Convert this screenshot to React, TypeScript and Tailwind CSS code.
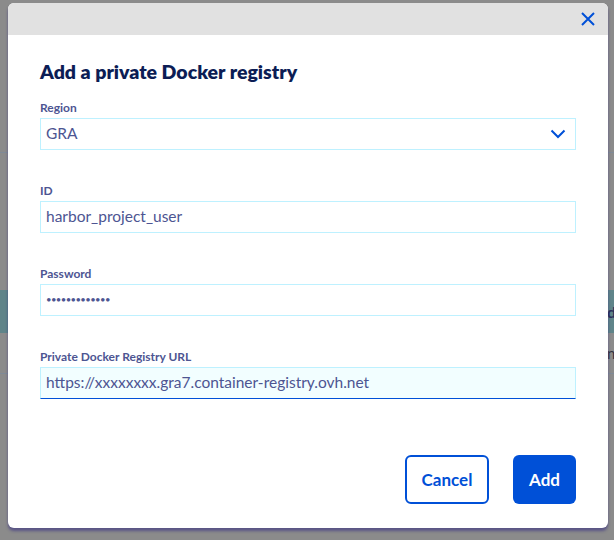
import React from "react";

const font = { fontFamily: '"Lato", "Open Sans", sans-serif' };

function Field({ label, children, focused }: { label: string; children: React.ReactNode; focused?: boolean }) {
  return (
    <div className="flex flex-col">
      <div className="h-[14px] text-[12px] font-bold leading-[14px] text-[#4d5592]">{label}</div>
      <div
        className={
          "mt-[3px] flex h-[32px] items-center border px-[5px] text-[15.5px] text-[#4d5592] " +
          (focused ? "border-[#bef1ff] border-b-[#0050d7] bg-[#f2feff]" : "border-[#bef1ff] bg-white")
        }
      >
        {children}
      </div>
    </div>
  );
}

export default function App() {
  return (
    <div className="relative h-[540px] w-[614px] overflow-hidden bg-[#8b8b8b]" style={font}>
      {/* underlying page hints */}
      <div className="absolute left-0 right-0 top-[152px] h-px bg-[#7f8a97]" />
      <div className="absolute left-0 right-0 top-[290px] h-[43px] bg-[#5f8489]" />
      <div className="absolute left-0 right-0 top-[373px] h-px bg-[#7f8a97]" />
      <div className="absolute left-[607px] top-[300px] text-[16px] font-bold text-[#2b2f5a]">d</div>
      <div className="absolute left-[607px] top-[342px] text-[15px] text-[#333340]">n</div>

      {/* modal */}
      <div className="absolute left-[8px] top-[3px] flex h-[525px] w-[600px] flex-col overflow-hidden rounded-[6px] bg-white shadow-[0_3px_3px_rgba(50,40,130,0.55)]">
        <div className="flex h-[32px] shrink-0 items-center justify-end bg-[#e1e1e1] pr-[13px]">
          <svg width="14" height="14" viewBox="0 0 14 14" fill="none">
            <path d="M1 1L13 13M13 1L1 13" stroke="#0050d7" strokeWidth="2" />
          </svg>
        </div>
        <div className="flex flex-1 flex-col px-[32px] pt-[25px]">
          <h1 className="h-[24px] text-[19.5px] font-extrabold leading-[24px] text-[#0c1d55]">
            Add a private Docker registry
          </h1>
          <div className="mt-[17px] flex flex-col gap-[34px]">
            <Field label="Region">
              <span className="flex-1">GRA</span>
              <svg width="16" height="10" viewBox="0 0 16 10" fill="none" className="mr-[4px]">
                <path d="M1.5 1.5L8 8L14.5 1.5" stroke="#0050d7" strokeWidth="2" />
              </svg>
            </Field>
            <Field label="ID">harbor_project_user</Field>
            <Field label="Password">
              <span className="text-[9.5px] tracking-[-0.6px]">•••••••••••••</span>
            </Field>
            <Field label="Private Docker Registry URL" focused>
              https://xxxxxxxx.gra7.container-registry.ovh.net
            </Field>
          </div>
          <div className="mt-[56px] flex justify-end gap-[24px]">
            <button className="flex h-[49px] w-[84px] items-center justify-center rounded-[6px] border-2 border-[#0050d7] bg-white text-[17px] font-bold text-[#0050d7]">
              Cancel
            </button>
            <button className="flex h-[49px] w-[63px] items-center justify-center rounded-[6px] bg-[#0050d7] text-[17px] font-bold text-white">
              Add
            </button>
          </div>
        </div>
      </div>
    </div>
  );
}
